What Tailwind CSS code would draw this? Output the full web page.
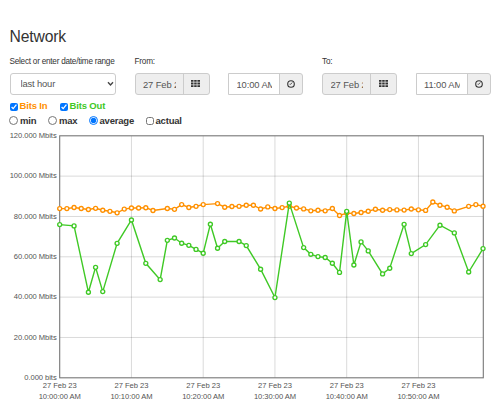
<!DOCTYPE html>
<html lang="en">
<head>
  <meta charset="UTF-8" />
  <title>Network</title>
  <script src="https://cdn.jsdelivr.net/npm/@tailwindcss/browser@4"></script>
</head>
<body class="w-[500px] h-[403px] overflow-hidden bg-white text-[#333] font-['Liberation_Sans',Arial,sans-serif]">

  <h1 class="pt-[27px] pl-[9.5px] text-[15.7px] tracking-[-0.15px] leading-5">Network</h1>

  <!-- Date / time range -->
  <form class="flex pl-[9.5px] pt-[9px] text-[8.2px] tracking-[-0.2px]">
    <div class="w-[125px]">
      <label for="range" class="block h-[17px] leading-[12px] tracking-[-0.24px] whitespace-nowrap">Select or enter date/time range</label>
      <div class="relative w-[106.5px]">
        <select id="range" class="appearance-none block w-full h-[22px] pl-[10px] pt-px border border-[#ccc] rounded-[3px] bg-white text-[#555] text-[9.4px] tracking-[-0.15px]">
          <option>last hour</option>
        </select>
        <svg class="absolute right-[2px] top-[8px] w-[7px] h-[6px]" viewBox="0 0 7 6" fill="none" stroke="#444" stroke-width="1.4"><path d="M1 1.3 3.5 3.9 6 1.3" /></svg>
      </div>
    </div>

    <div class="w-[187.5px]">
      <div class="h-[17px] leading-[12px]">From:</div>
      <div class="flex gap-[18.5px]">
        <div class="flex w-[75px] h-[22px] border border-[#ccc] rounded-[3px] bg-[#eee] text-[#555] text-[9.4px] tracking-[-0.1px]">
          <div class="w-[48px] pl-[7.5px] pr-[7px] border-r border-[#ccc] leading-[21px]"><div class="overflow-hidden whitespace-nowrap">27 Feb 2023</div></div>
          <div class="flex-1 flex items-center justify-center"><svg class="w-[9px] h-[7px] mb-[2px] mr-px" viewBox="0 0 9 7" fill="#333"><path d="M0 0h2.5v1.8H0zM3.2 0h2.5v1.8H3.2zM6.4 0H9v1.8H6.4zM0 2.6h2.5v1.8H0zM3.2 2.6h2.5v1.8H3.2zM6.4 2.6H9v1.8H6.4zM0 5.2h2.5V7H0zM3.2 5.2h2.5V7H3.2zM6.4 5.2H9V7H6.4z" /></svg></div>
        </div>
        <div class="flex w-[75px] h-[22px] border border-[#ccc] rounded-r-[3px] bg-[#eee] text-[#555] text-[9.4px] tracking-[-0.1px]">
          <div class="w-[51px] pl-[7.5px] pr-[7px] border-r border-[#ccc] bg-white leading-[21px]"><div class="overflow-hidden whitespace-nowrap">10:00 AM</div></div>
          <div class="flex-1 flex items-center justify-center"><svg class="w-[8px] h-[8px]" viewBox="0 0 8 8" fill="none" stroke="#333"><circle cx="4" cy="4" r="3.3" stroke-width="1.1" /><path d="M5.3 2.4 4 4.2H2.5" stroke-width=".7" /></svg></div>
        </div>
      </div>
    </div>

    <div>
      <div class="h-[17px] leading-[12px]">To:</div>
      <div class="flex gap-[18.5px]">
        <div class="flex w-[75px] h-[22px] border border-[#ccc] rounded-[3px] bg-[#eee] text-[#555] text-[9.4px] tracking-[-0.1px]">
          <div class="w-[48px] pl-[7.5px] pr-[7px] border-r border-[#ccc] leading-[21px]"><div class="overflow-hidden whitespace-nowrap">27 Feb 2023</div></div>
          <div class="flex-1 flex items-center justify-center"><svg class="w-[9px] h-[7px] mb-[2px] mr-px" viewBox="0 0 9 7" fill="#333"><path d="M0 0h2.5v1.8H0zM3.2 0h2.5v1.8H3.2zM6.4 0H9v1.8H6.4zM0 2.6h2.5v1.8H0zM3.2 2.6h2.5v1.8H3.2zM6.4 2.6H9v1.8H6.4zM0 5.2h2.5V7H0zM3.2 5.2h2.5V7H3.2zM6.4 5.2H9V7H6.4z" /></svg></div>
        </div>
        <div class="flex w-[75px] h-[22px] border border-[#ccc] rounded-r-[3px] bg-[#eee] text-[#555] text-[9.4px] tracking-[-0.1px]">
          <div class="w-[51px] pl-[7.5px] pr-[7px] border-r border-[#ccc] bg-white leading-[21px]"><div class="overflow-hidden whitespace-nowrap">11:00 AM</div></div>
          <div class="flex-1 flex items-center justify-center"><svg class="w-[8px] h-[8px]" viewBox="0 0 8 8" fill="none" stroke="#333"><circle cx="4" cy="4" r="3.3" stroke-width="1.1" /><path d="M5.3 2.4 4 4.2H2.5" stroke-width=".7" /></svg></div>
        </div>
      </div>
    </div>
  </form>

  <!-- Series toggles -->
  <div class="flex pl-[9.5px] mt-[5px] h-[13px] items-center text-[9.5px] tracking-[-0.15px] font-bold">
    <label class="flex items-center w-[50px] text-[#ff9000] whitespace-nowrap"><input type="checkbox" checked class="w-2 h-2 mr-[2px]" />Bits In</label>
    <label class="flex items-center text-[#3fc925] whitespace-nowrap"><input type="checkbox" checked class="w-2 h-2 mr-[2px]" />Bits Out</label>
  </div>
  <div class="flex pl-[9px] mt-px h-[15px] items-center text-[9.5px] tracking-[-0.2px] font-bold">
    <label class="flex items-center w-[39px]"><input type="radio" name="agg" class="w-[9px] h-[9px] mr-[2px] mb-[2px]" />min</label>
    <label class="flex items-center w-[40.5px]"><input type="radio" name="agg" class="w-[9px] h-[9px] mr-[2px] mb-[2px]" />max</label>
    <label class="flex items-center w-[57px]"><input type="radio" name="agg" checked class="w-[9px] h-[9px] mr-[2px] mb-[2px]" />average</label>
    <label class="flex items-center"><input type="checkbox" class="w-2 h-2 mr-[2px] mb-[2px]" />actual</label>
  </div>

  <!-- Chart -->
  <svg id="chart" class="block w-[500px] h-[274px] tracking-[-0.05px]" viewBox="0 129 500 274" font-size="7.6" fill="#545454"></svg>

  <script>
    // each point is [minute, y]
    const bitsIn = [
      [0, 208.6], [1, 208.6], [2, 207.5], [3, 208.5], [4, 209.5], [5, 208.3], [6, 210.2], [7, 211.3], [8, 212.8], [9, 209.1],
      [10, 208], [11, 208], [12, 207.7], [13, 210.5], [15, 208.5], [16, 209.3], [17, 204.6], [18, 207.5], [19, 206.3], [20, 204.6],
      [22, 203.6], [23, 207.2], [24, 206.5], [25, 206.3], [26, 205.2], [27, 205.2], [28, 209], [29, 206.9], [30, 208.5], [31, 207.6],
      [32, 206.2], [33, 208], [34, 208.9], [35, 210.8], [36, 210.2], [37, 210.8], [38, 208.5], [39, 215.5], [40, 213.1], [41, 213.5],
      [42, 212.5], [43, 211.2], [44, 209.2], [45, 210.2], [46, 209.6], [47, 209.9], [48, 210.1], [49, 209], [50, 209.8], [51, 210.4],
      [52, 202], [53, 205.2], [54, 207.2], [55, 210.9], [57, 206.3], [58, 204.6], [59, 206.2]
    ];
    const bitsOut = [
      [0, 224.6], [2, 225.9], [4, 292.2], [5, 267.3], [6, 291.6], [8, 243.3], [10, 220], [12, 263.3], [14, 279.6], [15, 240.3],
      [16, 238], [17, 243.2], [18, 245.3], [19, 249.4], [20, 253.2], [21, 224.2], [22, 248.2], [23, 241.5], [25, 241.5], [26, 245.6],
      [28, 269.2], [30, 297.6], [32, 203.1], [34, 247.6], [35, 254.3], [36, 256.6], [37, 257.5], [38, 263.2], [39, 272.4], [40, 211.3],
      [41, 265], [42, 241.9], [43, 250.9], [45, 273.9], [46, 268.2], [48, 224.3], [49, 253.6], [51, 244.6], [53, 225.2], [55, 232.9],
      [57, 272], [59, 248.6]
    ];
    const left = 59.7, right = 483.3, top0 = 135.8, bottom = 377.8;
    const x = m => left + m * 7.175;
    let out = '';

    // gridlines and axis labels
    for (let i = 0; i <= 6; i++) {
      const y = bottom - i * (bottom - top0) / 6;
      if (i > 0 && i < 6) out += `<path d="M${left} ${y}H${right}" stroke="#000" stroke-opacity=".15"/>`;
      out += `<text x="56.7" y="${y + 2.2}" text-anchor="end">${i ? i * 20 + '.000 Mbits' : '0.000 bits'}</text>`;
    }
    for (let m = 0; m < 60; m += 10) {
      if (m) out += `<path d="M${x(m)} ${top0}V${bottom}" stroke="#000" stroke-opacity=".15"/>`;
      out += `<text x="${x(m)}" y="388.3" text-anchor="middle">27 Feb 23</text>`;
      out += `<text x="${x(m)}" y="399" text-anchor="middle">10:${m || '00'}:00 AM</text>`;
    }
    out += `<rect x="${left}" y="${top0}" width="${right - left}" height="${bottom - top0}" fill="none" stroke="#777" stroke-width="1.1"/>`;

    function series(points, color) {
      out += `<polyline points="${points.map(p => x(p[0]) + ',' + p[1]).join(' ')}" fill="none" stroke="${color}" stroke-width="1.4"/>`;
      points.forEach(p => {
        out += `<circle cx="${x(p[0])}" cy="${p[1]}" r="2" fill="#fff" stroke="${color}" stroke-width="1.35"/>`;
      });
    }
    series(bitsIn, '#ff9000');
    series(bitsOut, '#3fc925');
    document.getElementById('chart').innerHTML = out;
  </script>
</body>
</html>
